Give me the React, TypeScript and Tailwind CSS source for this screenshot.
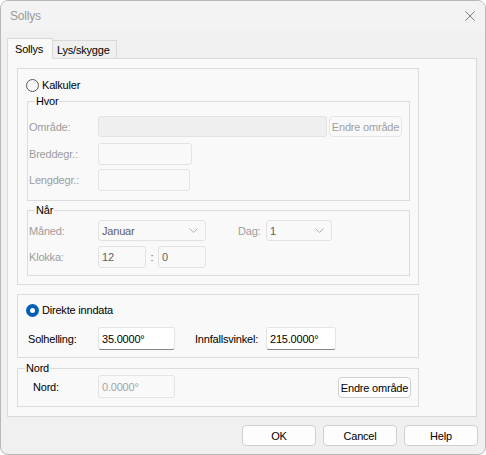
import React from "react";

const font = { fontFamily: '"Liberation Sans", Arial, sans-serif' };

function Radio({ checked, label }: { checked?: boolean; label: string }) {
  return (
    <div className="flex h-[14px] items-center gap-[3px] text-black">
      {checked ? (
        <span className="flex h-[13px] w-[13px] items-center justify-center rounded-full bg-[#005fb8]">
          <span className="h-[5px] w-[5px] rounded-full bg-white" />
        </span>
      ) : (
        <span className="h-[13px] w-[13px] rounded-full border border-[#5a5a5a] bg-[#f6f6f6]" />
      )}
      <span>{label}</span>
    </div>
  );
}

function Box({ w, h = 21, fill, value, muted }: { w: number; h?: number; fill?: boolean; value?: string; muted?: boolean }) {
  return (
    <div
      className={`flex items-center rounded-[3px] border border-[#e3e3e3] pl-[3px] ${fill ? "bg-[#efefef]" : "bg-[#f9f9f9]"} ${muted ? "text-[#a3a3a3]" : "text-[#606060]"}`}
      style={{ width: w, height: h }}
    >
      {value}
    </div>
  );
}

function Select({ w, value }: { w: number; value: string }) {
  return (
    <div className="flex h-[21px] items-center justify-between rounded-[3px] border border-[#e3e3e3] bg-[#f9f9f9] pl-[3px] pr-[7px] text-[#606060]" style={{ width: w }}>
      <span>{value}</span>
      <svg width="9" height="5" viewBox="0 0 9 5" fill="none">
        <path d="M0.5 0.5 L4.5 4.5 L8.5 0.5" stroke="#b0b0b0" strokeWidth="1" />
      </svg>
    </div>
  );
}

function Field({ w, value }: { w: number; value: string }) {
  return (
    <div className="flex h-[23px] items-center rounded-[3px] border border-[#e5e5e5] border-b-[#868686] bg-white pl-[3px] text-black" style={{ width: w }}>
      {value}
    </div>
  );
}

function Button({ label, disabled, w = 73 }: { label: string; disabled?: boolean; w?: number }) {
  return (
    <div
      className={`flex h-[21px] items-center justify-center rounded-[4px] border ${disabled ? "border-[#e5e5e5] bg-[#f9f9f9] text-[#a0a0a0]" : "border-[#d0d0d0] bg-[#fdfdfd] text-black"}`}
      style={{ width: w }}
    >
      {label}
    </div>
  );
}

export default function App() {
  return (
    <div className="flex h-[455px] w-[486px] flex-col overflow-hidden rounded-[8px] border border-[#b8b8b8] bg-[#f0f0f0] text-[11px] leading-[14px] tracking-[-0.2px]" style={font}>
      <div className="flex h-[30px] shrink-0 items-center justify-between bg-[#f3f3f3] pl-[9px] pr-[10px]">
        <span className="text-[12px] text-[#9a9a9a]">Sollys</span>
        <svg width="10" height="10" viewBox="0 0 10 10">
          <path d="M0.5 0.5 L9.5 9.5 M9.5 0.5 L0.5 9.5" stroke="#7a7a7a" strokeWidth="1" />
        </svg>
      </div>

      <div className="flex flex-1 flex-col pl-[6px] pt-[7px]">
        <div className="flex items-end">
          <div className="relative z-10 -mb-px flex h-[21px] w-[46px] items-start border border-b-0 border-[#d9d9d9] bg-[#f9f9f9] pl-[7px] pt-[3px] text-black">Sollys</div>
          <div className="flex h-[18px] w-[64px] items-start border border-b-0 border-l-0 border-[#d9d9d9] bg-[#f0f0f0] pl-[4px] pt-[2px] text-black">Lys/skygge</div>
        </div>

        <div className="h-[359px] w-[470px] border border-[#d9d9d9] bg-[#f9f9f9] pl-[9px] pt-[9px]">
          <div className="w-[402px] border border-[#dcdcdc] pb-[8px] pl-[9px] pt-[9px]">
            <div className="-ml-[1px]">
              <Radio label="Kalkuler" />
            </div>

            <fieldset className="mt-[2px] w-[383px] border border-[#dcdcdc] pb-[9px]">
              <legend className="ml-[7px] px-[1px] text-black">Hvor</legend>
              <div className="mt-[8px] flex items-center">
                <span className="w-[70px] pl-[1px] text-[#9d9d9d]">Område:</span>
                <Box w={229} fill />
                <div className="ml-[2px]">
                  <Button label="Endre område" disabled />
                </div>
              </div>
              <div className="mt-[6px] flex items-center">
                <span className="w-[70px] pl-[1px] text-[#9d9d9d]">Breddegr.:</span>
                <Box w={94} h={22} />
              </div>
              <div className="mt-[4px] flex items-center">
                <span className="w-[70px] pl-[1px] text-[#9d9d9d]">Lengdegr.:</span>
                <Box w={92} h={22} />
              </div>
            </fieldset>

            <fieldset className="mt-[2px] w-[383px] border border-[#dcdcdc] pb-[7px]">
              <legend className="ml-[7px] px-[1px] text-black">Når</legend>
              <div className="mt-[3px] flex items-center">
                <span className="w-[70px] pl-[1px] text-[#9d9d9d]">Måned:</span>
                <Select w={108} value="Januar" />
                <span className="ml-[32px] w-[28px] text-[#9d9d9d]">Dag:</span>
                <Select w={66} value="1" />
              </div>
              <div className="mt-[5px] flex items-center">
                <span className="w-[70px] pl-[1px] text-[#9d9d9d]">Klokka:</span>
                <Box w={48} h={22} value="12" />
                <span className="w-[12px] text-center text-[#606060]">:</span>
                <Box w={48} h={22} value="0" />
              </div>
            </fieldset>
          </div>

          <div className="mt-[9px] w-[402px] border border-[#dcdcdc] pb-[7px] pl-[8px] pt-[8px]">
            <Radio checked label="Direkte inndata" />
            <div className="mt-[10px] flex items-center">
              <span className="w-[72px] pl-[2px] text-black">Solhelling:</span>
              <Field w={77} value="35.0000°" />
              <span className="ml-[20px] w-[71px] text-black">Innfallsvinkel:</span>
              <Field w={70} value="215.0000°" />
            </div>
          </div>

          <fieldset className="mt-[3px] w-[402px] border border-[#dcdcdc] pb-[8px]">
            <legend className="ml-[7px] px-[1px] text-black">Nord</legend>
            <div className="flex items-center">
              <span className="w-[80px] pl-[15px] text-black">Nord:</span>
              <Box w={77} h={23} value="0.0000°" muted />
              <div className="ml-[163px] mt-[2px]">
                <Button label="Endre område" />
              </div>
            </div>
          </fieldset>
        </div>

        <div className="mt-[8px] flex justify-end gap-[7px] pr-[7px]">
          <Button label="OK" w={74} />
          <Button label="Cancel" w={74} />
          <Button label="Help" w={74} />
        </div>
      </div>
    </div>
  );
}
